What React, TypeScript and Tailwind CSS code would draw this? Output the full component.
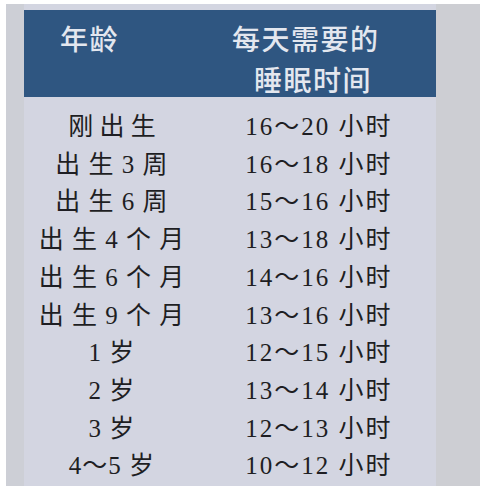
const rows: [string, string][] = [
  ["刚 出 生", "16～20 小时"],
  ["出 生 3 周", "16～18 小时"],
  ["出 生 6 周", "15～16 小时"],
  ["出 生 4 个 月", "13～18 小时"],
  ["出 生 6 个 月", "14～16 小时"],
  ["出 生 9 个 月", "13～16 小时"],
  ["1 岁", "12～15 小时"],
  ["2 岁", "13～14 小时"],
  ["3 岁", "12～13 小时"],
  ["4～5 岁", "10～12 小时"],
];

export default function App() {
  return (
    <div className="h-[486px] w-[480px] overflow-hidden bg-white">
      <div className="ml-[6px] mt-[4px] flex h-[482px] bg-[#cfd0d6]">
        <div className="w-[18px] bg-[#cdcfd6]" />
        <div className="flex w-[412px] flex-col bg-[#d3d5e1]">
          <div className="mt-[6px] flex h-[87px] bg-[#2f5681] font-['Noto_Sans_CJK_SC',sans-serif] text-[28px] font-medium tracking-[1.5px] text-[#e3e7ef]">
            <div className="w-[208px] pl-[36px] pt-[8px] leading-[40px]">年龄</div>
            <div className="flex flex-col pt-[8px] leading-[41px]">
              <div>每天需要的</div>
              <div className="ml-[22px]">睡眠时间</div>
            </div>
          </div>
          <div className="mt-[11px] flex flex-col font-['Liberation_Serif','Noto_Sans_CJK_SC',serif] text-[25px] text-[#1e1e23]">
            {rows.map(([age, hours]) => (
              <div key={hours + age} className="flex h-[37.7px] items-center">
                <div className={`w-[176px] text-center whitespace-pre ${age === "刚 出 生" ? "tracking-[0px]" : "tracking-[1px]"}`}>
                  {age}
                </div>
                <div className="w-[236px] pl-[2px] text-center tracking-[2px]">{hours}</div>
              </div>
            ))}
          </div>
        </div>
        <div className="flex-1 bg-[#cdced3]" />
      </div>
    </div>
  );
}
